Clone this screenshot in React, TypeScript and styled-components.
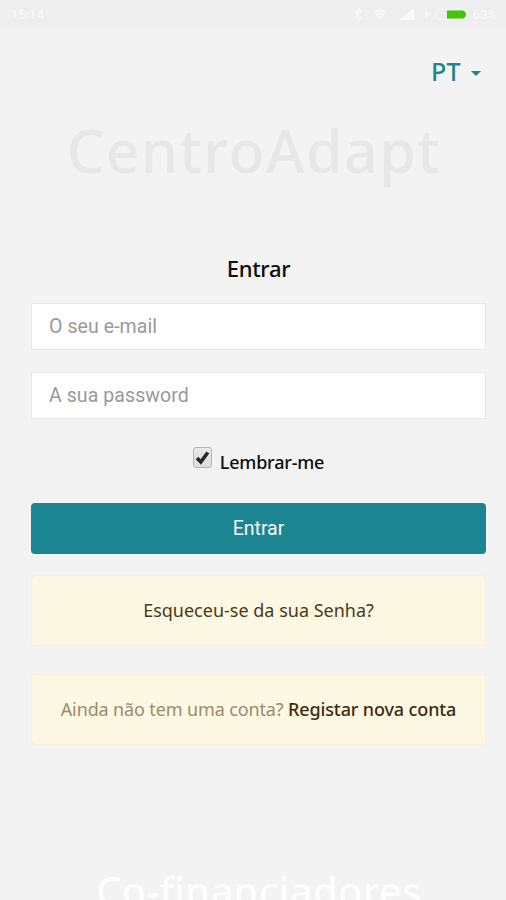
import React from "react";
import styled, { createGlobalStyle } from "styled-components";

const GlobalStyle = createGlobalStyle`
  *, *::before, *::after { box-sizing: border-box; }
  html, body { margin: 0; height: 900px; overflow: hidden; background: #f3f3f3; }
  button, input { font: inherit; }
`;

const brandFont = `"Noto Sans", "Open Sans", sans-serif`;

const Screen = styled.div`
  display: flex;
  flex-direction: column;
  width: 506px;
  height: 900px;
  overflow: hidden;
  background: #f3f3f3;
  color: #0c0c0c;
  font-family: ${brandFont};
`;

const StatusBar = styled.header`
  display: flex;
  flex: none;
  align-items: center;
  justify-content: space-between;
  height: 29px;
  padding: 0 9px 0 11px;
  background: linear-gradient(#eeeeee 75%, #f1f1f1);
  color: #fafafa;
  font: 400 13px/29px Roboto, sans-serif;
`;

const Clock = styled.span`
  letter-spacing: 0.2px;
`;

const StatusIcons = styled.div`
  display: flex;
  align-items: center;
  height: 29px;
`;

const TopBar = styled.nav`
  display: flex;
  flex: none;
  justify-content: flex-end;
  height: 83px;
  padding: 24px 25px 0 0;
`;

const LanguageButton = styled.button`
  display: flex;
  align-items: center;
  gap: 10px;
  height: 36px;
  padding: 0;
  border: 0;
  background: none;
  color: #1b8591;
  font: 500 25px/36px ${brandFont};
  letter-spacing: 0.4px;
`;

const Caret = styled.i`
  width: 0;
  height: 0;
  margin-top: 5px;
  border: 5px solid transparent;
  border-top: 5px solid #1b8591;
  border-bottom: 0;
`;

const Brand = styled.h1`
  flex: none;
  height: 83px;
  margin: 0 0 0 2px;
  color: #e7e7e7;
  font: 550 59px/76px ${brandFont};
  letter-spacing: 1.4px;
  text-align: center;
  white-space: nowrap;
`;

const Form = styled.form`
  display: flex;
  flex: none;
  flex-direction: column;
  width: 455px;
  margin: 58px 0 0 31px;
`;

const Heading = styled.h2`
  margin: 0;
  height: 50px;
  font: 500 22px/31px ${brandFont};
  letter-spacing: -0.3px;
  text-align: center;
`;

const Field = styled.input`
  height: 47px;
  margin: 0 0 22px;
  padding: 0 17px;
  border: 1px solid #e8e8e8;
  border-radius: 0;
  background: #ffffff;
  outline: 0;
  font: 400 19.5px Roboto, sans-serif;
  letter-spacing: 0.08px;
  &::placeholder { color: #999999; opacity: 1; }
`;

const Remember = styled.label`
  display: flex;
  justify-content: center;
  height: 62px;
  gap: 8px;
  padding-top: 6px;
  font: 500 18px/30px ${brandFont};
  letter-spacing: -0.2px;
`;

const CheckBox = styled.span`
  width: 19px;
  height: 21px;
  border: 1px solid #b5b5b5;
  border-radius: 3px;
  background: linear-gradient(#e8e8e8, #dedede);
  svg { display: block; }
`;

const Submit = styled.button`
  height: 51px;
  border: 0;
  border-radius: 4px;
  background: #1b8591;
  color: #f4fbfb;
  font: 400 19.5px/49px Roboto, sans-serif;
  padding: 0;
`;

const Notice = styled.div<{ $gap: number; $spacing: number }>`
  height: 71px;
  margin-top: ${(p) => p.$gap}px;
  border: 1px solid #faeed2;
  border-radius: 4px;
  background: #fcf8e3;
  color: #9c8b68;
  font: 400 18px/69px ${brandFont};
  letter-spacing: ${(p) => p.$spacing}px;
  text-align: center;
  white-space: nowrap;
`;

const NoticeLink = styled.a<{ $strong?: boolean }>`
  color: ${(p) => (p.$strong ? "#402b0c" : "#4c3917")};
  font-weight: ${(p) => (p.$strong ? 500 : 400)};
`;

const Sponsors = styled.h2`
  flex: none;
  margin: 121px 0 0 12px;
  color: #fdfdfd;
  font: 500 40px/50px ${brandFont};
  letter-spacing: 0.25px;
  text-align: center;
  white-space: nowrap;
`;

function StatusGlyphs() {
  return (
    <svg width="120" height="29" viewBox="354 0 120 29" fill="none" stroke="#f8f8f8">
      <path d="m356 11 6 7-3 3V8l3 3-6 7" strokeWidth="1.4" />
      <path d="M374 12q7-6 14 0l-7 8z" fill="#f7f7f7" stroke="none" />
      <path d="M376 14q5-4 10 0m-7 2q2-2 4 0" stroke="#eeeeee" />
      <path d="M401 20 415 8v12z" fill="#fafafa" stroke="none" />
      <path d="m426 10 6 4.5-6 4.5z" fill="#f8f8f8" stroke="none" />
      <rect x="437" y="9" width="31" height="11" rx="5.5" strokeWidth="1.5" stroke="#f4f4f4" />
      <path d="M448 10.5h16q3 1 3 4t-3 4h-16z" fill="#42c607" stroke="none" />
    </svg>
  );
}

export default function App() {
  return (
    <Screen>
      <GlobalStyle />
      <StatusBar>
        <Clock>15:14</Clock>
        <StatusIcons>
          <StatusGlyphs />
          <span>63%</span>
        </StatusIcons>
      </StatusBar>
      <TopBar>
        <LanguageButton type="button">
          PT
          <Caret />
        </LanguageButton>
      </TopBar>
      <Brand>CentroAdapt</Brand>
      <Form>
        <Heading>Entrar</Heading>
        <Field type="email" placeholder="O seu e-mail" />
        <Field type="password" placeholder="A sua password" />
        <Remember>
          <CheckBox role="checkbox" aria-checked="true">
            <svg width="17" height="19" viewBox="0 0 17 19" fill="none" stroke="#292929">
              <path d="m3 10 3.8 4 7-9.5" strokeWidth="3.6" />
            </svg>
          </CheckBox>
          <span>Lembrar-me</span>
        </Remember>
        <Submit type="button">Entrar</Submit>
        <Notice $gap={21} $spacing={0}>
          <NoticeLink>Esqueceu-se da sua Senha?</NoticeLink>
        </Notice>
        <Notice $gap={28} $spacing={-0.13}>
          Ainda não tem uma conta? <NoticeLink $strong>Registar nova conta</NoticeLink>
        </Notice>
      </Form>
      <Sponsors>Co-financiadores</Sponsors>
    </Screen>
  );
}
